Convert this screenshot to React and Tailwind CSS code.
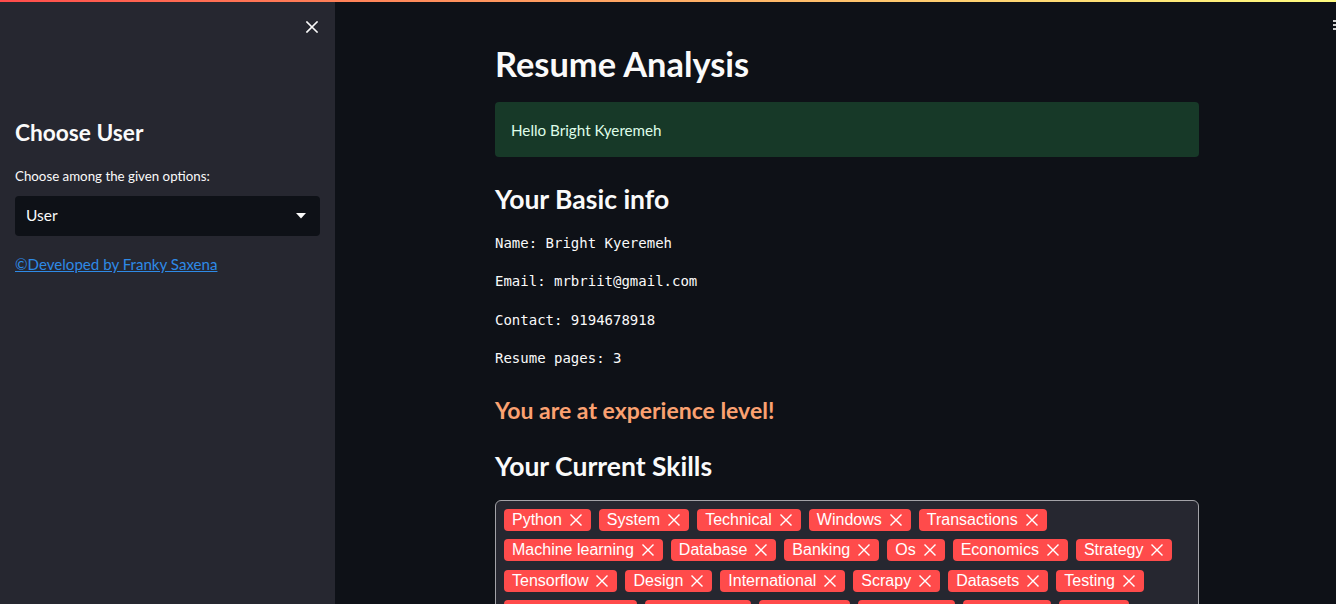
import React from "react";

const rows = [
  ["Python", "System", "Technical", "Windows", "Transactions"],
  ["Machine learning", "Database", "Banking", "Os", "Economics", "Strategy"],
  ["Tensorflow", "Design", "International", "Scrapy", "Datasets", "Testing"],
  ["Data analysis", "Analytical", "Pandas", "Seaborn", "Numpy", "Html"],
];

function XIcon({ size = 12, stroke = 1.5, className = "" }) {
  return (
    <svg width={size} height={size} viewBox="0 0 12 12" className={className} fill="none">
      <path d="M1 1L11 11M11 1L1 11" stroke="currentColor" strokeWidth={stroke} strokeLinecap="square" />
    </svg>
  );
}

function Tag({ label }) {
  return (
    <span className="flex h-[22px] items-center rounded-[4px] bg-[#ff4b4b] pl-[8px] pr-[9px] text-[16px] leading-[22px] text-white [font-family:'Liberation_Sans',Arial,sans-serif]">
      <span>{label}</span>
      <XIcon size={12} stroke={1.4} className="ml-[8px] text-white" />
    </span>
  );
}

export default function App() {
  return (
    <div className="relative flex h-[604px] w-[1336px] overflow-hidden bg-[#0e1117] text-[#fafafa] [font-family:Lato,'Noto_Sans',sans-serif]">
      <div className="absolute left-0 right-0 top-0 h-[2px] bg-gradient-to-r from-[#ff4b4b] to-[#fffd80]" />
      <div className="absolute right-0 top-[20px] flex w-[3px] flex-col gap-[2px]">
        <span className="h-[2px] bg-[#d0d0d0]" />
        <span className="h-[2px] bg-[#d0d0d0]" />
        <span className="h-[2px] bg-[#d0d0d0]" />
      </div>

      <aside className="flex w-[335px] shrink-0 flex-col bg-[#262730] px-[15px]">
        <div className="flex justify-end pr-[2px] pt-[21px]">
          <button className="text-[#fafafa]">
            <XIcon size={12} stroke={1.6} />
          </button>
        </div>
        <h2 className="mt-[85px] text-[22.7px] font-bold leading-[30px]">Choose User</h2>
        <p className="mt-[18px] text-[13.3px] leading-[20px]">Choose among the given options:</p>
        <div className="mt-[10px] flex h-[40px] items-center justify-between rounded-[4px] bg-[#0e1117] pl-[11px] pr-[14px]">
          <span className="text-[15.5px]">User</span>
          <svg width="10" height="6" viewBox="0 0 10 6">
            <path d="M0 0h10L5 5.5z" fill="#fafafa" />
          </svg>
        </div>
        <a href="#" className="mt-[16px] text-[15.1px] leading-[24px] text-[#2e8ae6] underline">
          ©Developed by Franky Saxena
        </a>
      </aside>

      <main className="flex-1 pl-[160px]">
        <div className="w-[704px]">
          <h1 className="mt-[44px] text-[34.4px] font-bold leading-[40px]">Resume Analysis</h1>
          <div className="mt-[18px] flex h-[55px] items-center rounded-[4px] bg-[#173928] px-[16px] pt-[1px] text-[15.2px] text-[#dffde9]">
            Hello Bright Kyeremeh
          </div>
          <h2 className="mt-[26px] text-[26.5px] font-bold leading-[32px]">Your Basic info</h2>
          <div className="mt-[9px] text-[14px] leading-[38.3px] [font-family:'DejaVu_Sans_Mono',monospace]">
            <p>Name: Bright Kyeremeh</p>
            <p>Email: mrbriit@gmail.com</p>
            <p>Contact: 9194678918</p>
            <p>Resume pages: 3</p>
          </div>
          <h4 className="mt-[17px] text-[23px] font-bold leading-[32px] text-[#fba171]">You are at experience level!</h4>
          <h2 className="mt-[24px] text-[26.5px] font-bold leading-[32px]">Your Current Skills</h2>
          <div className="mt-[18px] flex flex-col gap-[8.3px] rounded-[6px] border border-[#a3a3a8] bg-[#262730] p-[8px]">
            {rows.map((r, i) => (
              <div key={i} className="flex gap-[8px]">
                {r.map((t) => (
                  <Tag key={t} label={t} />
                ))}
              </div>
            ))}
          </div>
        </div>
      </main>
    </div>
  );
}
